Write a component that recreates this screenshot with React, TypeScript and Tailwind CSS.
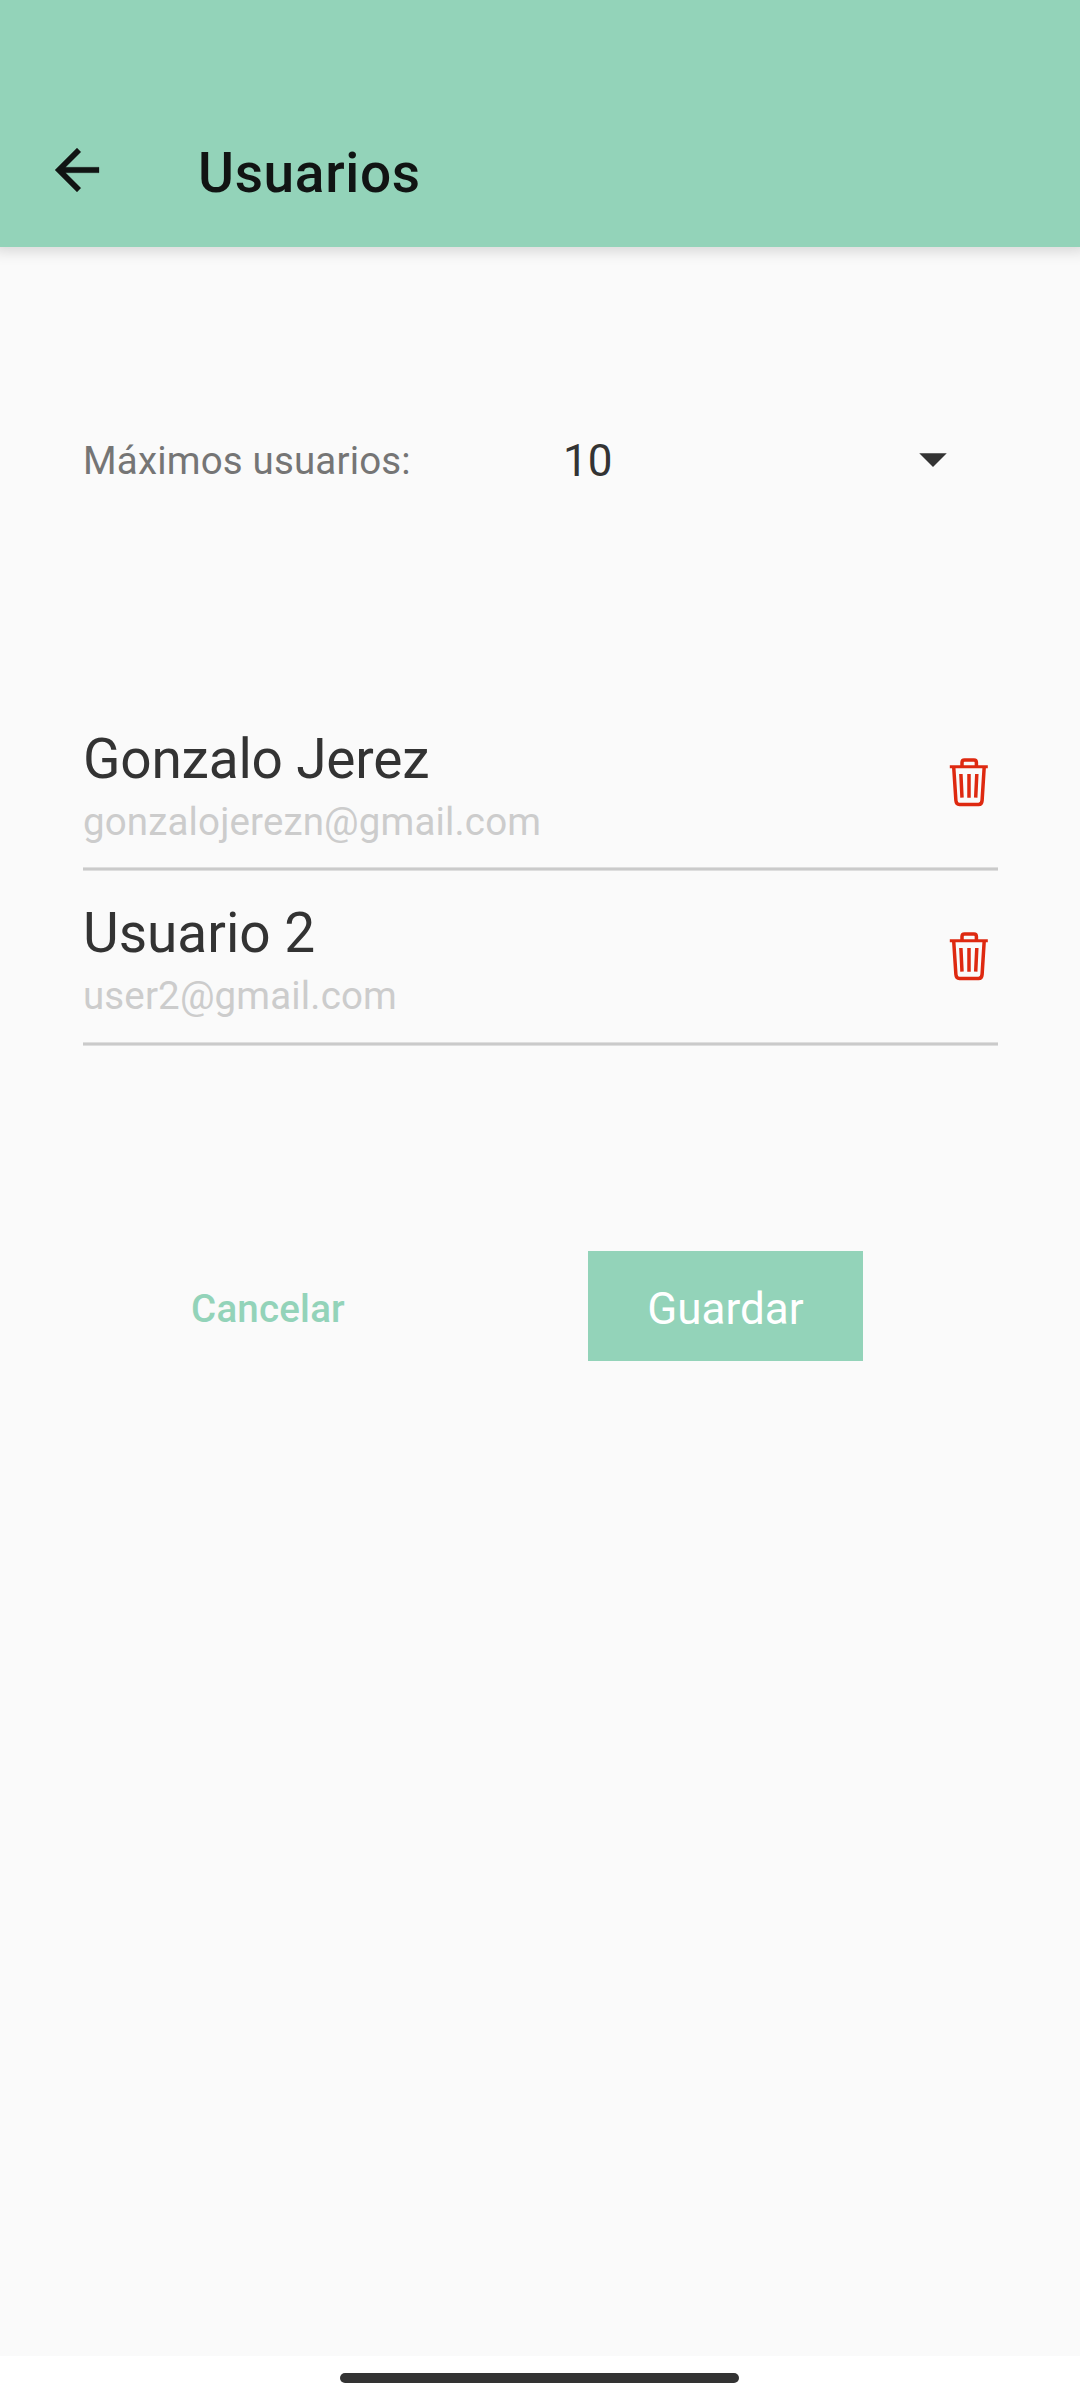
import React from 'react';

const users = [
  { name: 'Gonzalo Jerez', email: 'gonzalojerezn@gmail.com', tracking: 'tracking-[-0.2px]' },
  { name: 'Usuario 2', email: 'user2@gmail.com', tracking: 'tracking-normal' },
];

function TrashIcon() {
  return (
    <svg width="50" height="60" viewBox="0 0 50 60" fill="none" stroke="#de2910" strokeWidth="3.5" className="block">
      <path d="M5.800 14.700H43.800" strokeWidth="3" />
      <path d="M18 14V10.500Q18 8 20.500 8H30Q32.400 8 32.400 10.500V14" />
      <path d="M9.700 15L11.900 48.500Q12.200 52.400 15.500 52.400H34.500Q37.800 52.400 38.100 48.500L40.200 15" />
      <path d="M16.900 22L18 45.700M25 22V45.700M32.800 22L31.700 45.700" />
    </svg>
  );
}

export default function App() {
  return (
    <div className="flex h-[2400px] w-[1080px] flex-col overflow-hidden bg-[#fafafa] font-[Roboto,sans-serif] text-[#333333]">
      <header className="flex h-[247px] shrink-0 items-start bg-[#93d3b9] pt-[137px] shadow-[0_-3px_14px_7px_rgba(0,0,0,0.15)]">
        <button className="ml-[44px] block h-[66px] w-[66px]" aria-label="Volver">
          <svg width="66" height="66" viewBox="0 0 24 24" fill="#111413" stroke="#111413" strokeWidth="0.1">
            <path d="M20 11H7.830l5.590-5.590L12 4l-8 8 8 8 1.410-1.410L7.830 13H20v-2z" />
          </svg>
        </button>
        <h1 className="ml-[88px] mt-[4px] text-[55px] leading-[64px] font-medium tracking-[0.65px] text-[#111413]">Usuarios</h1>
      </header>
      <main className="flex grow flex-col pr-[82px] pl-[83px]">
        <div className="mt-[170px] flex h-[88px] items-center">
          <span className="w-[480px] text-[38.5px] leading-[44px] tracking-[0.17px] text-[#757575]">Máximos usuarios:</span>
          <button className="flex w-[384px] items-center justify-between text-[44px] leading-[52px]">
            <span>10</span>
            <svg width="28" height="14" viewBox="0 0 28 14" fill="#333333" className="mb-[3px]">
              <path d="M0.250 0.250H27.750L14 14Z" />
            </svg>
          </button>
        </div>
        <ul className="mt-[191px]">
          {users.map((u) => (
            <li key={u.email} className="flex h-[175px] flex-col justify-between pt-[31px] last:pt-[30px]">
              <div className="flex justify-between">
                <div>
                  <p className={`text-[55px] leading-[64px] ${u.tracking}`}>{u.name}</p>
                  <p className="mt-[8px] text-[38.5px] leading-[45px] tracking-[0.14px] text-[#cccccc]">{u.email}</p>
                </div>
                <button className="mt-[25px] mr-[4px] h-[60px] w-[50px]" aria-label="Eliminar">
                  <TrashIcon />
                </button>
              </div>
              <div className="h-[4px] border-y border-[#dedede] bg-[#cacaca]" />
            </li>
          ))}
        </ul>
        <div className="mt-[205px] flex items-center">
          <button className="ml-[47px] h-[110px] w-[275px] pt-[5px] pl-[1px] text-[38.5px] font-medium tracking-[0.2px] text-[#93d3b9]">Cancelar</button>
          <button className="ml-[183px] h-[110px] w-[275px] bg-[#93d3b9] pt-[6px] text-[44px] text-white">Guardar</button>
        </div>
      </main>
      <footer className="flex h-[44px] shrink-0 justify-center bg-white pt-[17px] pr-[1px]">
        <div className="h-[10px] w-[399px] rounded-full bg-[#333333]" />
      </footer>
    </div>
  );
}
